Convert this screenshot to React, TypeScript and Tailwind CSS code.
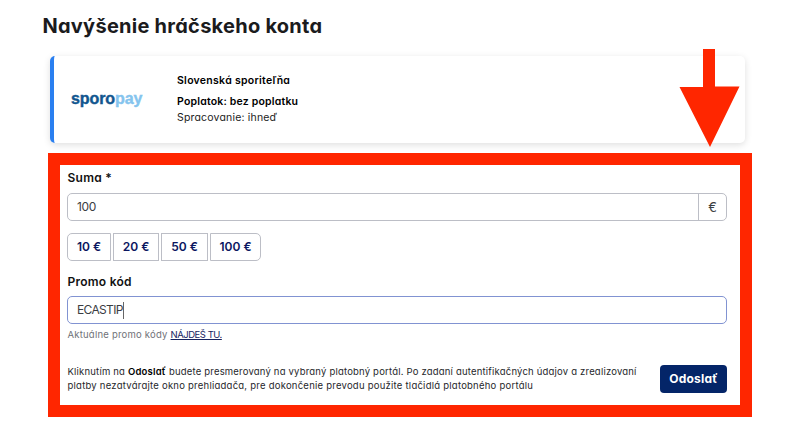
import React from "react";

const amounts = [
  { label: "10 €", shape: "w-[44px] rounded-l-[5px]" },
  { label: "20 €", shape: "w-[46px]" },
  { label: "50 €", shape: "w-[47px]" },
  { label: "100 €", shape: "w-[51px] rounded-r-[5px]" },
];

function PaymentCard() {
  return (
    <section className="ml-[50px] mt-[14px] flex h-[87px] w-[695px] items-start rounded-[5px] border-l-4 border-[#2a7ff0] bg-white shadow-[0_2px_7px_rgba(0,0,0,0.13)]">
      <div className="ml-[17px] mt-[33px] w-[106px] whitespace-nowrap font-['Liberation_Sans',sans-serif] text-[16px] font-bold leading-[20px] tracking-[-0.1px] text-[#11568f] [-webkit-text-stroke:0.4px]">
        sporo<span className="text-[#85c4ee]">pay</span>
      </div>
      <div className="whitespace-nowrap pt-[17px] text-[10.5px] leading-[16px] text-[#222]">
        <p className="font-semibold tracking-[0.28px] text-black">Slovenská sporiteľňa</p>
        <p className="mt-[5px] font-semibold tracking-[0.19px] text-black">Poplatok: bez poplatku</p>
        <p className="tracking-[0.18px]">Spracovanie: ihneď</p>
      </div>
    </section>
  );
}

function DepositForm() {
  return (
    <section className="ml-[48px] mt-[10px] h-[264px] w-[704px] whitespace-nowrap border-[12px] border-[#ff2600] bg-white pl-[7px] pt-[4px]">
      <div className="h-[18px] pl-[0.5px] text-[12px] font-semibold leading-[18px] tracking-[0.25px] text-[#111]">
        Suma *
      </div>
      <div className="mt-[6px] flex h-[28px] w-[660px] rounded-[5px] border border-[#bcbec6] text-[12px] leading-[26px] text-[#3b3d42]">
        <div className="flex-1 pl-[9px] tracking-[-0.4px]">100</div>
        <div className="w-[28px] border-l border-[#bcbec6] text-center text-[13px]">€</div>
      </div>
      <div className="mt-[12px] flex gap-[2px]">
        {amounts.map((amount) => (
          <button
            key={amount.label}
            className={`h-[28px] border border-[#bcbec6] text-[12px] font-semibold leading-[26px] text-[#0b1660] ${amount.shape}`}
          >
            {amount.label}
          </button>
        ))}
      </div>
      <div className="mt-[12px] h-[18px] pl-[0.5px] text-[12px] font-semibold leading-[18px] tracking-[0.25px] text-[#111]">
        Promo kód
      </div>
      <div className="mt-[5px] flex h-[28px] w-[660px] items-center rounded-[5px] border border-[#8193d2] pl-[9px] text-[12px] text-[#3b3d42]">
        <span className="tracking-[-0.65px]">ECASTIP</span>
        <i className="h-[17px] w-px bg-[#666]" />
      </div>
      <div className="mt-[4px] h-[14px] pl-[0.5px] text-[9.5px] leading-[14px] text-[#707278]">
        <span className="tracking-[0.22px]">Aktuálne promo kódy </span>
        <a className="tracking-[-0.48px] text-[#16235f] underline underline-offset-1">NÁJDEŠ TU.</a>
      </div>
      <div className="mt-[23px] flex w-[660px] justify-between">
        <p className="pl-[0.5px] text-[9.5px] leading-[14px] text-[#26272b]">
          <span className="tracking-[0.197px]">
            Kliknutím na <b className="font-semibold text-black">Odoslať</b> budete presmerovaný na vybraný platobný portál. Po zadaní autentifikačných údajov a zrealizovaní
          </span>
          <br />
          <span className="tracking-[0.24px]">
            platby nezatvárajte okno prehliadača, pre dokončenie prevodu použite tlačidlá platobného portálu
          </span>
        </p>
        <button className="h-[28px] w-[67px] rounded-[4px] bg-[#042568] text-[12px] font-bold tracking-[0.2px] text-white">
          Odoslať
        </button>
      </div>
    </section>
  );
}

export default function App() {
  return (
    <main className="relative h-[432px] w-[800px] overflow-hidden bg-white font-['Inter',sans-serif] [font-feature-settings:'cv11']">
      <h1 className="ml-[42.5px] h-[42px] whitespace-nowrap pt-[11px] text-[20px] font-bold leading-[30px] tracking-[0.26px] text-[#1b1b1d]">
        Navýšenie hráčskeho konta
      </h1>
      <PaymentCard />
      <DepositForm />
      <svg className="absolute left-[679px] top-[49px]" width="61" height="98" viewBox="0 0 61 98">
        <path d="M24 0H36V37.5H60.5L31 98L0.500 38H24Z" fill="#ff2600" />
      </svg>
    </main>
  );
}
